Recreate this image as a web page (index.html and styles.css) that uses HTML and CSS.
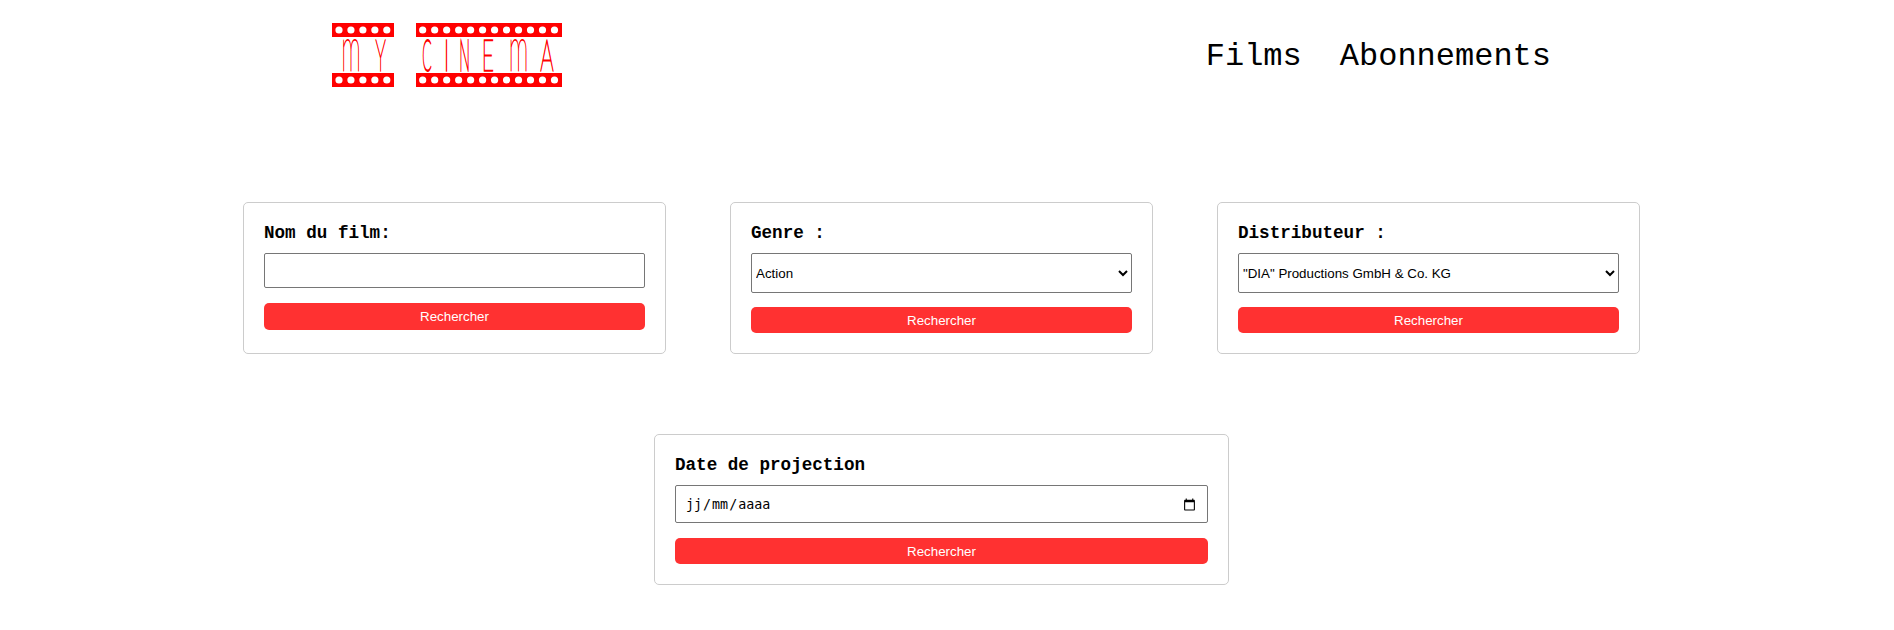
FILE: index.html
```html
<!DOCTYPE html>
<html lang="fr">
<head>
<meta charset="utf-8">
<title>My Cinema</title>
<link rel="stylesheet" href="styles.css">
</head>
<body>
<header class="header">
  <svg class="logo" width="232" height="66" viewBox="332 22 232 66" role="img" aria-label="My Cinema">
    <g class="logo-band">
      <path d="M332 23h62v14h-62zM332 73h62v14h-62zM416 23h146v14h-146zM416 73h146v14h-146z"/>
    </g>
    <g class="logo-dots">
      <path d="M339 30h48M339 80h48" stroke-dasharray="0 11.95"/>
      <path d="M422.7 30h132.4M422.7 80h132.4" stroke-dasharray="0 11.98"/>
    </g>
    <g class="logo-text">
      <text class="logo-round" transform="translate(351 70.5) scale(.8 1.98)">m</text>
      <text transform="translate(380.5 70.5) scale(.58 1.42)">Y</text>
      <text class="logo-narrow" transform="translate(427 70.5) scale(.44 1.42)">C</text>
      <text transform="translate(446.5 70.5) scale(.8 1.42)">I</text>
      <text class="logo-narrow" transform="translate(464.5 70.5) scale(.46 1.42)">N</text>
      <text transform="translate(488 70.5) scale(.68 1.42)">E</text>
      <text class="logo-round" transform="translate(518.5 70.5) scale(.8 1.98)">m</text>
      <text transform="translate(547 70.5) scale(.68 1.42)">A</text>
    </g>
  </svg>
  <nav class="nav">
    <a class="nav-link">Films</a>
    <a class="nav-link">Abonnements</a>
  </nav>
</header>
<main class="search">
  <div class="row">
    <form class="card">
      <label class="label" for="film">Nom du film:</label>
      <input class="field field-text" id="film" type="text">
      <button class="button button-tall" type="button">Rechercher</button>
    </form>
    <form class="card">
      <label class="label" for="genre">Genre :</label>
      <select class="field field-select" id="genre"><option>Action</option></select>
      <button class="button" type="button">Rechercher</button>
    </form>
    <form class="card">
      <label class="label" for="distrib">Distributeur :</label>
      <select class="field field-select" id="distrib"><option>"DIA" Productions GmbH &amp; Co. KG</option></select>
      <button class="button" type="button">Rechercher</button>
    </form>
  </div>
  <form class="card card-wide">
    <span class="label">Date de projection</span>
    <div class="field field-date">
      <span class="date"><span class="part">jj</span>/<span class="part">mm</span>/<span class="part">aaaa</span></span>
      <svg class="calendar" width="13" height="13" viewBox="0 0 24 24"><path d="M20 3h-1V1h-2v2H7V1H5v2H4c-1.100 0-2 .9-2 2v16c0 1.100.9 2 2 2h16c1.100 0 2-.9 2-2V5c0-1.100-.9-2-2-2zm0 18H4V8h16v13z"/></svg>
    </div>
    <button class="button" type="button">Rechercher</button>
  </form>
</main>
</body>
</html>
```

FILE: styles.css
```css
* { box-sizing: border-box; }
body {
  margin: 0;
  background: #fff;
  color: #000;
  font-family: "Liberation Mono", monospace;
}
.header {
  display: flex;
  justify-content: space-between;
  align-items: center;
  height: 110px;
  padding: 0 343px 0 332px;
}
.logo { display: block; overflow: visible; }
.logo-band { fill: #f00; }
.logo-dots {
  fill: none;
  stroke: #fff;
  stroke-width: 7.2;
  stroke-linecap: round;
}
.logo-text {
  fill: #f00;
  font-family: Lato, "Open Sans", sans-serif;
  font-weight: 100;
  font-size: 31px;
  text-anchor: middle;
  stroke: #f00;
  stroke-width: 1;
}
.logo-round { stroke-width: .5; }
.logo-narrow { stroke-width: 1.4; }
.nav {
  display: flex;
  gap: 38px;
  padding-top: 4px;
}
.nav-link {
  font-size: 32px;
  line-height: 36px;
}
.search {
  display: flex;
  flex-direction: column;
  align-items: center;
  gap: 80px;
  padding: 92px 11px 0 0;
}
.row {
  display: flex;
  gap: 64px;
}
.card {
  display: flex;
  flex-direction: column;
  width: 423px;
  height: 152px;
  padding: 20px;
  border: 1px solid #ccc;
  border-radius: 5px;
}
.card-wide {
  width: 575px;
  height: 151px;
}
.label {
  margin-bottom: 10px;
  font-size: 17.6px;
  font-weight: bold;
  line-height: 20px;
}
.field {
  width: 100%;
  margin: 0;
  border: 1px solid #767676;
  border-radius: 2px;
  background: #fff;
  color: #000;
  font-family: "Liberation Sans", sans-serif;
  font-size: 13.333px;
}
.field-text { height: 35px; margin-bottom: 15px; }
.field-select { height: 40px; margin-bottom: 14px; }
.field-date {
  display: flex;
  align-items: center;
  justify-content: space-between;
  height: 38px;
  margin-bottom: 15px;
  padding: 0 11px 0 9px;
  font-family: "DejaVu Sans Mono", monospace;
}
.part { padding: 0 1px; }
.button {
  height: 26px;
  padding: 0;
  border: 0;
  border-radius: 5px;
  background: #ff3131;
  color: #fff;
  font-family: "Liberation Sans", sans-serif;
  font-size: 13.333px;
}
.button-tall { height: 27px; }
```
